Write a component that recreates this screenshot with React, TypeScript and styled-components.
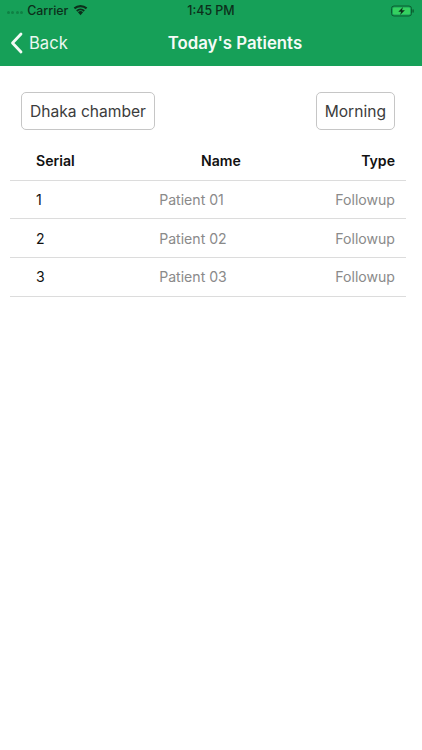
import React from "react";
import styled, { createGlobalStyle } from "styled-components";

const Global = createGlobalStyle`
  html, body { margin: 0; padding: 0; background: #fff; }
  body { font-family: Inter, "Liberation Sans", sans-serif; }
`;

const Page = styled.div`
  width: 422px;
  height: 750px;
  background: #fff;
  overflow: hidden;
`;

const Header = styled.header`
  height: 66px;
  background: #16a058;
  display: flex;
  flex-direction: column;
  box-sizing: border-box;
`;

const StatusBar = styled.div`
  height: 21px;
  position: relative;
  display: flex;
  align-items: center;
  padding: 0 8px 0 7px;
  color: #0c2f1b;
  font-size: 12.4px;
  font-weight: 500;
`;

const Dots = styled.div`
  display: flex;
  gap: 1.4px;
  margin-right: 4px;
  margin-top: 4px;
`;

const Dot = styled.span`
  width: 3px;
  height: 3px;
  border-radius: 50%;
  background: #0f8044;
`;

const Carrier = styled.span`
  margin-right: 4px;
`;

const Wifi = styled.svg`
  margin-top: -2px;
`;

const Time = styled.span`
  position: absolute;
  left: 0;
  right: 0;
  text-align: center;
`;

const Battery = styled.svg`
  margin-left: auto;
`;

const NavBar = styled.div`
  flex: 1;
  display: flex;
  align-items: center;
  color: #fff;
  padding: 0 0 2px 10px;
`;

const BackLink = styled.div`
  display: flex;
  align-items: center;
  gap: 6px;
  font-size: 16.6px;
  font-weight: 400;
  color: #eaf7f0;
`;

const Title = styled.h1`
  margin: 0 0 0 100px;
  font-size: 16.8px;
  font-weight: 600;
  color: #f5fbf7;
`;

const Filters = styled.div`
  display: flex;
  justify-content: space-between;
  padding: 26px 27px 0 21px;
`;

const FilterButton = styled.button`
  height: 38px;
  padding: 0 8px;
  background: #fff;
  border: 1px solid #c6c6c6;
  border-radius: 5px;
  font-family: inherit;
  font-size: 15.6px;
  color: #3c3c3c;
`;

const Table = styled.div`
  margin: 12px 16px 0 10px;
`;

const Row = styled.div`
  height: 37.7px;
  display: flex;
  justify-content: space-between;
  align-items: center;
  padding: 0 11px 0 26px;
  border-bottom: 1px solid #dcdcdc;
`;

const Cell = styled.div<{ $head?: boolean; $muted?: boolean }>`
  font-size: 14.1px;
  font-weight: ${(p) => (p.$head ? 600 : 400)};
  color: ${(p) => (p.$muted ? "#8a8a8a" : "#111")};
`;

const MiddleCell = styled(Cell)`
  margin-left: 6px;
`;

const patients = [
  { id: 1, name: "Patient 01", type: "Followup" },
  { id: 2, name: "Patient 02", type: "Followup" },
  { id: 3, name: "Patient 03", type: "Followup" },
];

export default function App() {
  return (
    <Page>
      <Global />
      <Header>
        <StatusBar>
          <Dots>
            <Dot /><Dot /><Dot /><Dot />
          </Dots>
          <Carrier>Carrier</Carrier>
          <Wifi width="17" height="13" viewBox="0 0 16 12">
            <path d="M8 11.5 L5.6 8.6 A3.6 3.6 0 0 1 10.4 8.6 Z" fill="#0c2f1b" />
            <path d="M3.9 6.7 A6.2 6.2 0 0 1 12.1 6.7 L11 8 A4.6 4.6 0 0 0 5 8 Z" fill="#0c2f1b" />
            <path d="M1.6 4.1 A9.6 9.6 0 0 1 14.4 4.1 L13.1 5.7 A7.7 7.7 0 0 0 2.9 5.7 Z" fill="#0c2f1b" />
          </Wifi>
          <Time>1:45 PM</Time>
          <Battery width="23" height="12" viewBox="0 0 23 12">
            <rect x="0.5" y="1" width="20" height="10" rx="2.5" fill="none" stroke="#0c5e30" />
            <rect x="2" y="2.5" width="17" height="7" rx="1" fill="#35d060" />
            <rect x="21.4" y="4.2" width="1.4" height="3.6" rx="0.7" fill="#0c5e30" />
            <path d="M12 2 L7.3 6.8 H10.1 L9.1 10 L13.9 5.2 H11 Z" fill="#0c2f1b" />
          </Battery>
        </StatusBar>
        <NavBar>
          <BackLink>
            <svg width="13" height="22" viewBox="0 0 13 22">
              <path d="M11 2 L2.5 11 L11 20" fill="none" stroke="#f2faf5" strokeWidth="2.8" strokeLinecap="round" strokeLinejoin="round" />
            </svg>
            Back
          </BackLink>
          <Title>Today's Patients</Title>
        </NavBar>
      </Header>
      <Filters>
        <FilterButton>Dhaka chamber</FilterButton>
        <FilterButton>Morning</FilterButton>
      </Filters>
      <Table>
        <Row>
          <Cell $head>Serial</Cell>
          <MiddleCell $head>Name</MiddleCell>
          <Cell $head>Type</Cell>
        </Row>
        {patients.map((p) => (
          <Row key={p.id}>
            <Cell>{p.id}</Cell>
            <MiddleCell $muted>{p.name}</MiddleCell>
            <Cell $muted>{p.type}</Cell>
          </Row>
        ))}
      </Table>
    </Page>
  );
}
